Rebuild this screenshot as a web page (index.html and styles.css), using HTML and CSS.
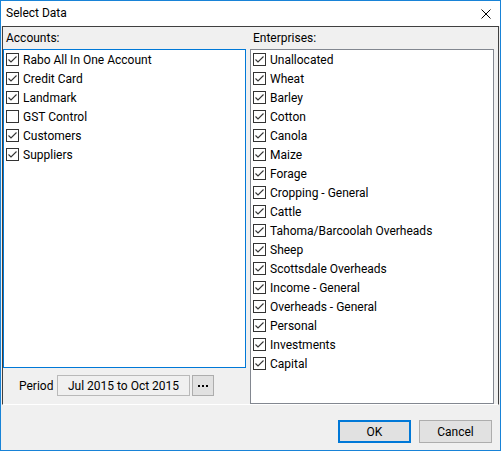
FILE: index.html
```html
<!DOCTYPE html>
<html>
<head>
<meta charset="utf-8">
<link rel="stylesheet" href="styles.css">
</head>
<body>
<svg class="defs" width="0" height="0">
  <symbol id="cb-on" viewBox="0 0 13 13">
    <rect x="0.5" y="0.5" width="12" height="12" fill="#fff" stroke="#333"/>
    <polyline points="2.5,6.5 5,9 10.5,3.5" fill="none" stroke="#333" stroke-width="1.1"/>
  </symbol>
  <symbol id="cb-off" viewBox="0 0 13 13">
    <rect x="0.5" y="0.5" width="12" height="12" fill="#fff" stroke="#333"/>
  </symbol>
</svg>
<div class="window">
  <div class="titlebar">
    <span class="title">Select Data</span>
    <svg class="close" width="10" height="10" viewBox="0 0 10 10"><path d="M0.5 0.5 L9.5 9.5 M9.5 0.5 L0.5 9.5" stroke="#000" stroke-width="1" fill="none"/></svg>
  </div>
  <div class="split">
    <div class="pane pane-left">
      <div class="pane-head">Accounts:</div>
      <div class="listbox listbox-focused">
        <div class="item"><svg class="cb"><use href="#cb-on"/></svg><span>Rabo All In One Account</span></div>
        <div class="item"><svg class="cb"><use href="#cb-on"/></svg><span>Credit Card</span></div>
        <div class="item"><svg class="cb"><use href="#cb-on"/></svg><span>Landmark</span></div>
        <div class="item"><svg class="cb"><use href="#cb-off"/></svg><span>GST Control</span></div>
        <div class="item"><svg class="cb"><use href="#cb-on"/></svg><span>Customers</span></div>
        <div class="item"><svg class="cb"><use href="#cb-on"/></svg><span>Suppliers</span></div>
      </div>
      <div class="period-row">
        <span class="period-label">Period</span>
        <div class="period-box">Jul 2015 to Oct 2015</div>
        <div class="dots-btn"><span class="dot"></span><span class="dot"></span><span class="dot"></span></div>
      </div>
    </div>
    <div class="pane pane-right">
      <div class="pane-head">Enterprises:</div>
      <div class="listbox listbox-right">
        <div class="item"><svg class="cb"><use href="#cb-on"/></svg><span>Unallocated</span></div>
        <div class="item"><svg class="cb"><use href="#cb-on"/></svg><span>Wheat</span></div>
        <div class="item"><svg class="cb"><use href="#cb-on"/></svg><span>Barley</span></div>
        <div class="item"><svg class="cb"><use href="#cb-on"/></svg><span>Cotton</span></div>
        <div class="item"><svg class="cb"><use href="#cb-on"/></svg><span>Canola</span></div>
        <div class="item"><svg class="cb"><use href="#cb-on"/></svg><span>Maize</span></div>
        <div class="item"><svg class="cb"><use href="#cb-on"/></svg><span>Forage</span></div>
        <div class="item"><svg class="cb"><use href="#cb-on"/></svg><span>Cropping - General</span></div>
        <div class="item"><svg class="cb"><use href="#cb-on"/></svg><span>Cattle</span></div>
        <div class="item"><svg class="cb"><use href="#cb-on"/></svg><span>Tahoma/Barcoolah Overheads</span></div>
        <div class="item"><svg class="cb"><use href="#cb-on"/></svg><span>Sheep</span></div>
        <div class="item"><svg class="cb"><use href="#cb-on"/></svg><span>Scottsdale Overheads</span></div>
        <div class="item"><svg class="cb"><use href="#cb-on"/></svg><span>Income - General</span></div>
        <div class="item"><svg class="cb"><use href="#cb-on"/></svg><span>Overheads - General</span></div>
        <div class="item"><svg class="cb"><use href="#cb-on"/></svg><span>Personal</span></div>
        <div class="item"><svg class="cb"><use href="#cb-on"/></svg><span>Investments</span></div>
        <div class="item"><svg class="cb"><use href="#cb-on"/></svg><span>Capital</span></div>
      </div>
    </div>
  </div>
  <div class="footer">
    <div class="btn btn-default">OK</div>
    <div class="btn">Cancel</div>
  </div>
</div>
</body>
</html>
```
FILE: styles.css
```css
html, body {
  margin: 0;
  padding: 0;
  background: #f0f0f0;
}
body {
  font-family: Roboto, "Liberation Sans", Arial, sans-serif;
  font-size: 12px;
  color: #000;
}
.defs {
  position: absolute;
  width: 0;
  height: 0;
  overflow: hidden;
}
.window {
  width: 501px;
  height: 451px;
  box-sizing: border-box;
  border: 1px solid #1883d7;
  background: #f0f0f0;
  display: flex;
  flex-direction: column;
}
.titlebar {
  height: 25px;
  flex: none;
  background: #fff;
  display: flex;
  align-items: center;
  justify-content: space-between;
  padding-left: 5px;
  padding-right: 9px;
}
.title {
  line-height: 25px;
}
.close {
  display: block;
  margin-top: 1px;
}
.split {
  flex: none;
  height: 379px;
  box-sizing: border-box;
  margin: 0 1px;
  border: 1px solid #404040;
  border-bottom-color: #fff;
  display: flex;
  gap: 3px;
}
.pane {
  display: flex;
  flex-direction: column;
}
.pane-left {
  width: 244px;
}
.pane-right {
  width: 248px;
}
.pane-head {
  height: 22px;
  line-height: 22px;
  padding-left: 3px;
}
.listbox {
  box-sizing: border-box;
  background: #fff;
  border: 1px solid #828790;
}
.listbox-focused {
  width: 243px;
  height: 319px;
  border-color: #0078d7;
}
.listbox-right {
  width: 244px;
  height: 355px;
}
.item {
  height: 19px;
  display: flex;
  align-items: center;
  padding-left: 2px;
  white-space: nowrap;
}
.cb {
  width: 13px;
  height: 13px;
  flex: none;
  margin-right: 4px;
}
.period-row {
  margin-top: 7px;
  height: 21px;
  display: flex;
  align-items: center;
  padding-left: 16px;
}
.period-label {
  width: 38px;
}
.period-box {
  width: 133px;
  height: 21px;
  box-sizing: border-box;
  border: 1px solid #b9b9b9;
  background: #f0f0f0;
  display: flex;
  align-items: center;
  justify-content: center;
}
.dots-btn {
  margin-left: 2px;
  width: 22px;
  height: 21px;
  box-sizing: border-box;
  border: 1px solid #adadad;
  background: #e1e1e1;
  display: flex;
  align-items: center;
  justify-content: center;
  gap: 2px;
}
.dot {
  width: 2px;
  height: 2px;
  background: #000;
}
.footer {
  flex: 1;
  display: flex;
  justify-content: flex-end;
  align-items: flex-start;
  padding-top: 15px;
  padding-right: 8px;
  gap: 8px;
}
.btn {
  width: 73px;
  height: 23px;
  box-sizing: border-box;
  border: 1px solid #adadad;
  background: #e1e1e1;
  display: flex;
  align-items: center;
  justify-content: center;
}
.btn-default {
  border: 2px solid #0078d7;
}
```
